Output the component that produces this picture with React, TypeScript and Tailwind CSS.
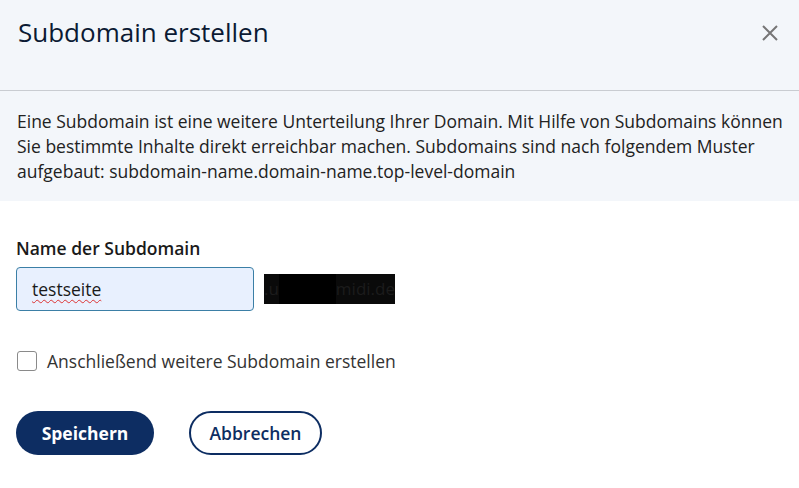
import React from "react"

export default function App() {
  return (
    <div className="w-[799px] h-[488px] bg-white overflow-hidden" style={{ fontFamily: '"Open Sans", sans-serif' }}>
      <div className="h-[91px] bg-[#f3f6fa] border-b border-[#c9ccd1] flex items-start justify-between pl-[18px] pr-[20px] pt-[13px]">
        <h1 className="text-[26px] leading-[38px] font-medium text-[#0b1a33]">Subdomain erstellen</h1>
        <button className="mt-[11px] text-[#777] w-[18px] h-[18px] flex items-center justify-center">
          <svg width="18" height="18" viewBox="0 0 18 18" fill="none" stroke="#767676" strokeWidth="2">
            <path d="M2 2 L16 16 M16 2 L2 16" />
          </svg>
        </button>
      </div>
      <div className="bg-[#f3f6fa] h-[110px] pl-[17px] pr-[10px] pt-[18px]">
        <p className="text-[17.5px] leading-[25px] text-[#222]">
          Eine Subdomain ist eine weitere Unterteilung Ihrer Domain. Mit Hilfe von Subdomains können Sie bestimmte Inhalte direkt erreichbar machen. Subdomains sind nach folgendem Muster aufgebaut: subdomain-name.domain-name.top-level-domain
        </p>
      </div>
      <div className="px-[16px] pt-[35px]">
        <label className="block text-[17.5px] leading-[24px] font-semibold text-[#1a1a1a] mb-[7px]">Name der Subdomain</label>
        <div className="flex items-center gap-[10px]">
          <div className="w-[238px] h-[44px] rounded-[4px] border border-[#3b7fa6] bg-[#e8f0fe] flex items-center px-[15px]">
            <span className="text-[17.5px] text-[#1a1a1a] underline decoration-wavy decoration-[#d33] decoration-1 underline-offset-[3px]">testseite</span>
          </div>
          <div className="w-[131px] h-[30px] bg-[#0a0a0a] flex items-center text-[17px] text-[#1c1c1c] overflow-hidden">
            <span>.u</span>
            <span className="w-[58px] h-full bg-black" />
            <span>midi.de</span>
          </div>
        </div>
        <div className="flex items-center gap-[10px] mt-[38px]">
          <div className="w-[20px] h-[20px] border border-[#8a8a8a] rounded-[3px] bg-white ml-[1px]" />
          <span className="text-[17.5px] leading-[24px] text-[#333]">Anschließend weitere Subdomain erstellen</span>
        </div>
        <div className="flex items-center gap-[35px] mt-[38px]">
          <button className="w-[138px] h-[44px] rounded-full bg-[#0d2d62] text-white text-[17.5px] font-bold">Speichern</button>
          <button className="w-[133px] h-[44px] rounded-full border-2 border-[#0d2d62] bg-white text-[#0d2d62] text-[17.5px] font-semibold">Abbrechen</button>
        </div>
      </div>
    </div>
  )
}
